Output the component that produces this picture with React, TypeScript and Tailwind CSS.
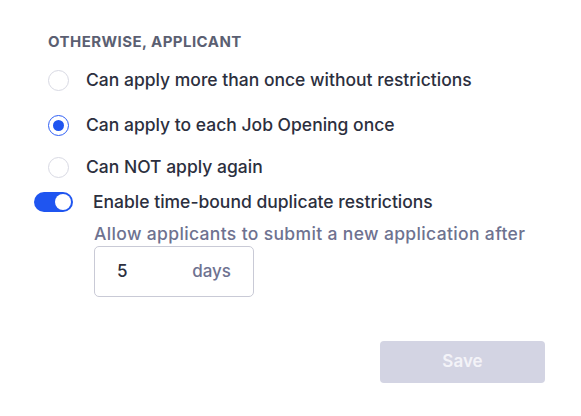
import React, { useState } from 'react';

const options = [
  { label: 'Can apply more than once without restrictions', mt: 'mt-[15px]' },
  { label: 'Can apply to each Job Opening once', mt: 'mt-[19px]' },
  { label: 'Can NOT apply again', mt: 'mt-[16px]' },
];

const Radio: React.FC<{ checked: boolean }> = ({ checked }) => (
  <span
    className={`flex h-[21px] w-[21px] shrink-0 items-center justify-center rounded-full border bg-white ${
      checked ? 'border-[#2f5ff5]' : 'border-[#d8d9e3]'
    }`}
  >
    {checked && <span className="h-[11px] w-[11px] rounded-full bg-[#1f55f0]" />}
  </span>
);

export default function App() {
  const [selected, setSelected] = useState(1);
  const [enabled, setEnabled] = useState(true);

  return (
    <div className="h-[416px] w-[581px] bg-white font-['Inter',sans-serif] font-medium text-[#2c2f3e]">
      <div className="pl-[48px] pt-[32px] text-[15px] leading-[20px] font-bold uppercase tracking-[0.03em] text-[#5b5f72]">
        Otherwise, Applicant
      </div>

      <div className="flex flex-col pl-[48px]">
        {options.map((o, i) => (
          <label
            key={o.label}
            className={`${o.mt} flex h-[26px] cursor-pointer items-center gap-[17px] text-[17.5px]`}
            onClick={() => setSelected(i)}
          >
            <Radio checked={selected === i} />
            <span>{o.label}</span>
          </label>
        ))}
      </div>

      <div className="mt-[9px] flex h-[26px] items-center gap-[20px] pl-[34px]">
        <button
          onClick={() => setEnabled(!enabled)}
          className={`flex h-[20px] w-[39px] items-center rounded-full px-[2px] ${
            enabled ? 'justify-end bg-[#1f55f0]' : 'justify-start bg-[#c9cad6]'
          }`}
        >
          <span className="h-[16px] w-[16px] rounded-full bg-white" />
        </button>
        <span className="text-[17.5px]">Enable time-bound duplicate restrictions</span>
      </div>

      <div className="pl-[94px] pt-[7px]">
        <div className="text-[17.5px] leading-[24px] tracking-[0.02em] text-[#6e7290]">
          Allow applicants to submit a new application after
        </div>
        <div className="flex h-[51px] w-[160px] items-center rounded-[5px] border border-[#c9cad6] pl-[22px] pr-[22px] text-[17px]">
          <span className="flex-1 text-[#2c2f3e]">5</span>
          <span className="text-[#6e7290]">days</span>
        </div>
      </div>

      <div className="flex justify-end pr-[36px] pt-[44px]">
        <button className="h-[42px] w-[165px] rounded-[4px] bg-[#d3d4e3] text-[17px] font-semibold text-[#f3f3f8]">
          Save
        </button>
      </div>
    </div>
  );
}
